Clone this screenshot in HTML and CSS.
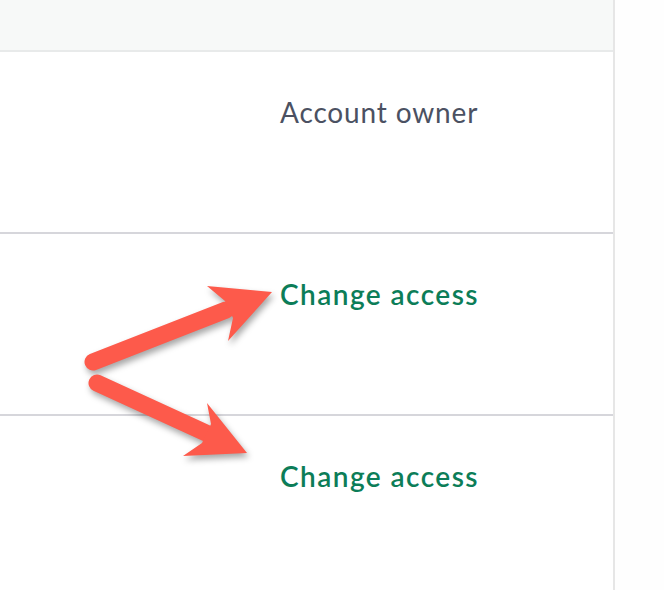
FILE: index.html
```html
<!DOCTYPE html>
<html>
<head>
<meta charset="utf-8">
<link rel="stylesheet" href="styles.css">
</head>
<body>
<div class="page">
  <div class="table">
    <div class="head"></div>
    <div class="row"><div class="cell"><span class="role">Account owner</span></div></div>
    <div class="row"><div class="cell"><a class="link">Change access</a></div></div>
    <div class="row last"><div class="cell"><a class="link">Change access</a></div></div>
  </div>
  <div class="side"></div>
  <svg class="arrows" width="664" height="590" viewBox="0 0 664 590">
    <g class="arrow">
      <line x1="93" y1="362" x2="226" y2="310" stroke="#fd5a4b" stroke-width="17" stroke-linecap="round"/>
      <polygon points="272,292 207,286 225,301 233,318 228,341" fill="#fd5a4b"/>
    </g>
    <g class="arrow">
      <line x1="97" y1="383" x2="206" y2="433" stroke="#fd5a4b" stroke-width="17" stroke-linecap="round"/>
      <polygon points="247,453 207,403 211,424 202,443 183,456" fill="#fd5a4b"/>
    </g>
  </svg>
</div>
</body>
</html>
```
FILE: styles.css
```css
html, body {
  margin: 0;
  padding: 0;
  background: #ffffff;
}
.page {
  position: relative;
  width: 664px;
  height: 590px;
  display: flex;
  overflow: hidden;
  font-family: Lato, "Open Sans", sans-serif;
}
.table {
  width: 613px;
  border-right: 2px solid #e6e6e6;
  background: #ffffff;
  display: flex;
  flex-direction: column;
}
.head {
  height: 50px;
  background: #f7f9f8;
  border-bottom: 2px solid #e8eaea;
}
.row {
  height: 180px;
  border-bottom: 2px solid #d6d6db;
}
.row.last {
  border-bottom: none;
  flex: 1;
}
.cell {
  padding: 43px 0 0 280px;
  font-size: 28px;
  line-height: 34px;
}
.role {
  color: #4b5162;
  letter-spacing: 0.85px;
}
.link {
  color: #0c7d58;
  font-weight: 600;
  letter-spacing: 1.45px;
}
.side {
  flex: 1;
  background: #fefefe;
}
.arrows {
  position: absolute;
  left: 0;
  top: 0;
  pointer-events: none;
}
.arrow {
  filter: drop-shadow(2px 4px 3px rgba(0, 0, 0, 0.35));
}
```
